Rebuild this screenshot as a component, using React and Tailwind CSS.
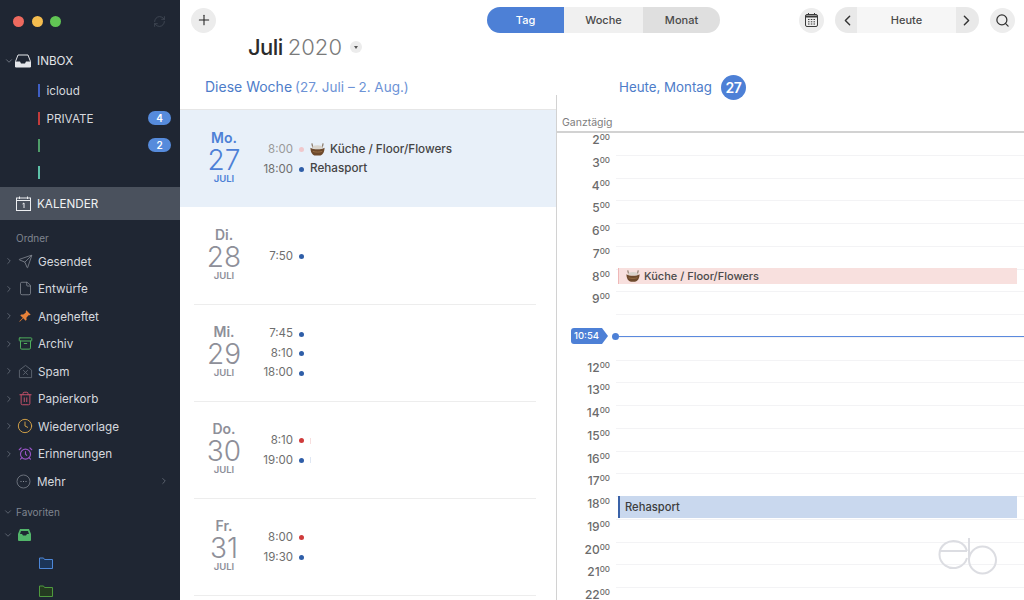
import {
  AlarmClock,
  Archive,
  ChevronDown,
  ChevronLeft,
  ChevronRight,
  Clock,
  File,
  Plus,
  RefreshCw,
  Search,
  Send,
  Trash2,
} from "lucide-react";

const accounts = [
  { name: "icloud", color: "bg-[#3f5fc4]" },
  { name: "PRIVATE", color: "bg-[#c23b3b]", badge: 4 },
  { name: "", color: "bg-[#4f9d69]", badge: 2 },
  { name: "", color: "bg-[#5cc0a8]" },
];

const SpamIcon = () => (
  <svg width="15" height="15" viewBox="0 0 16 16" fill="none" stroke="#5d6470" strokeWidth="1">
    <path d="M1.5 6.5 8 1.5l6.5 5v8h-13z" />
    <path d="m5.5 6.5 5 5m0-5-5 5" />
  </svg>
);

const PinIcon = () => (
  <svg width="14" height="14" viewBox="0 0 16 16" fill="#e8823a">
    <path d="M9.5 1.5 14.500 6.500 13 7.200 12 7 9.600 10l.2 2.400L8.700 13.500 6 10.500 2 14.500l-.5-.5L5.500 10 2.600 7.300 3.700 6.200l2.400.2L9 4l-.2-1z" />
  </svg>
);

const folders = [
  { name: "Gesendet", icon: <Send size={15} strokeWidth={1.2} color="#8b909a" /> },
  { name: "Entwürfe", icon: <File size={15} strokeWidth={1.2} color="#8b909a" /> },
  { name: "Angeheftet", icon: <PinIcon /> },
  { name: "Archiv", icon: <Archive size={15} strokeWidth={1.6} color="#4fae5c" /> },
  { name: "Spam", icon: <SpamIcon /> },
  { name: "Papierkorb", icon: <Trash2 size={15} strokeWidth={1.6} color="#c4506a" /> },
  { name: "Wiedervorlage", icon: <Clock size={16} strokeWidth={1.4} color="#d9a648" /> },
  { name: "Erinnerungen", icon: <AlarmClock size={15} strokeWidth={1.8} color="#9a55c8" /> },
];

const days = [
  {
    short: "Mo.",
    num: 27,
    today: true,
    events: [
      { time: "8:00", dot: "bg-[#f0c8cc]", faded: true, title: "Küche / Floor/Flowers", basket: true },
      { time: "18:00", dot: "bg-[#2f5ea8]", title: "Rehasport" },
    ],
  },
  { short: "Di.", num: 28, events: [{ time: "7:50", dot: "bg-[#2f5ea8]" }] },
  {
    short: "Mi.",
    num: 29,
    events: [
      { time: "7:45", dot: "bg-[#2f5ea8]" },
      { time: "8:10", dot: "bg-[#2f5ea8]" },
      { time: "18:00", dot: "bg-[#2f5ea8]" },
    ],
  },
  {
    short: "Do.",
    num: 30,
    events: [
      { time: "8:10", dot: "bg-[#cf3b3b]", tick: "bg-[#f7dede]" },
      { time: "19:00", dot: "bg-[#2f5ea8]", tick: "bg-[#dfe7f3]" },
    ],
  },
  {
    short: "Fr.",
    num: 31,
    events: [
      { time: "8:00", dot: "bg-[#cf3b3b]" },
      { time: "19:30", dot: "bg-[#2f5ea8]" },
    ],
  },
];

const hours = [2, 3, 4, 5, 6, 7, 8, 9, 10, 11, 12, 13, 14, 15, 16, 17, 18, 19, 20, 21, 22];

const Basket = ({ size = 15 }) => (
  <svg width={size} height={size} viewBox="0 0 16 16" className="shrink-0">
    <path d="M3 6 2 1.500M13 6l1-4.500" stroke="#8a7a6a" strokeWidth="1.300" fill="none" />
    <ellipse cx="8" cy="5.500" rx="5.500" ry="2" fill="#d9d4cc" />
    <path d="M.5 6c2 1.500 4.500 1.800 7.500 1.800S13.500 7.500 15.500 6c0 4.500-2 8.500-5.500 8.500H6C2.500 14.500.5 10.500.5 6z" fill="#6e4a2c" />
    <path d="M3 10c3 1 7 1 10 0" stroke="#9a7048" strokeWidth="1" fill="none" />
  </svg>
);

const Sidebar = () => (
  <aside className="flex h-full w-[180px] shrink-0 flex-col overflow-hidden bg-[#1f2633] text-[11.700px] text-[#d5d8de]">
    <div className="flex h-[42px] shrink-0 items-center pr-[14px] pl-[13px]">
      <span className="h-[11px] w-[11px] rounded-full bg-[#ee6a5f]" />
      <span className="ml-[7.500px] h-[11px] w-[11px] rounded-full bg-[#f5bd4f]" />
      <span className="ml-[7.500px] h-[11px] w-[11px] rounded-full bg-[#61c554]" />
      <RefreshCw size={13} strokeWidth={1.2} color="#4c5360" className="ml-auto" />
    </div>

    <div className="flex h-[35px] shrink-0 items-start pt-[11px] pl-[4px]">
      <span className="flex h-[16px] items-center">
        <ChevronDown size={10} color="#7c828d" />
      </span>
      <svg width="16" height="14" viewBox="0 0 16 14" className="mt-[1px] ml-[1px]" fill="none">
        <path d="M3 1h10l2.500 6.500V13H.5V7.500z" stroke="#e4e6ea" strokeWidth="1" />
        <path d="M.5 7.500h4.500l1 2h4l1-2h4.500V13H.5z" fill="#e4e6ea" />
      </svg>
      <span className="ml-[6px] leading-[16px] text-[#e2e4e8]">INBOX</span>
    </div>

    {accounts.map((a, i) => (
      <div key={i} className="flex h-[27.400px] shrink-0 items-center pr-[9px] pl-[37.500px]">
        <span className={`h-[13px] w-[2px] ${a.color}`} />
        <span className="ml-[7px] pt-[3px]">{a.name}</span>
        {a.badge && (
          <span className="ml-auto flex h-[14px] w-[23px] items-center justify-center rounded-full bg-[#568bdc] text-[10px] font-semibold text-white">
            {a.badge}
          </span>
        )}
      </div>
    ))}

    <div className="flex h-[33px] shrink-0 items-center bg-[#4a515d] pl-[16px] text-[#f0f1f3]">
      <svg width="15" height="15" viewBox="0 0 15 15" fill="none" stroke="#eceef1" strokeWidth="1">
        <rect x="0.500" y="2" width="14" height="12.500" />
        <path d="M0.500 4.500h14M3.500 0.500v2.500M11.500 0.500v2.500" />
        <path d="M6.500 8 8 7v5" strokeWidth="1" />
      </svg>
      <span className="ml-[6px] pt-[3px]">KALENDER</span>
    </div>

    <div className="flex h-[27.750px] shrink-0 items-end pb-[1px] pl-[16px] text-[10px] text-[#7f8590]">Ordner</div>

    {folders.map((f) => (
      <div key={f.name} className="flex h-[27.500px] shrink-0 items-center pl-[4px]">
        <ChevronRight size={10} color="#666d79" />
        <span className="ml-[3px] flex w-[16px] justify-center">{f.icon}</span>
        <span className="ml-[5px] pt-[3px]">{f.name}</span>
      </div>
    ))}

    <div className="flex h-[27.500px] shrink-0 items-center pr-[11px] pl-[16px]">
      <svg width="15" height="15" viewBox="0 0 15 15" fill="none">
        <circle cx="7.500" cy="7.500" r="6.500" stroke="#6a707b" />
        <path d="M4.500 7.500h1M7 7.500h1M9.500 7.500h1" stroke="#8b909a" strokeWidth="1.200" />
      </svg>
      <span className="ml-[6px] pt-[3px]">Mehr</span>
      <ChevronRight size={10} color="#666d79" className="ml-auto" />
    </div>

    <div className="flex h-[27px] shrink-0 items-end pb-[2px] pl-[3px] text-[10px] text-[#7f8590]">
      <span className="flex h-[15px] items-center">
        <ChevronDown size={10} color="#666d79" />
      </span>
      <span className="ml-[3px]">Favoriten</span>
    </div>

    <div className="flex h-[27px] shrink-0 items-center pl-[3px]">
      <ChevronDown size={10} color="#666d79" />
      <svg width="13" height="12" viewBox="0 0 13 12" className="ml-[5px]">
        <path d="M2 0h9l2 5v6a1 1 0 0 1-1 1H1a1 1 0 0 1-1-1V5z" fill="#52b56a" />
        <path d="M3 2h7l1 3H9L8 6.500H5L4 5H2z" fill="#1f2633" />
      </svg>
    </div>

    <div className="flex h-[28px] shrink-0 items-center pl-[39px]">
      <svg width="14" height="12" viewBox="0 0 14 12" fill="#1c3558" stroke="#4d87d8" strokeWidth="1">
        <path d="M.5 1h4l1 1.500h8v9H.5z" />
      </svg>
    </div>
    <div className="flex h-[28px] shrink-0 items-center pl-[39px]">
      <svg width="14" height="12" viewBox="0 0 14 12" fill="#243a20" stroke="#4f9a3e" strokeWidth="1">
        <path d="M.5 1h4l1 1.500h8v9H.5z" />
      </svg>
    </div>
  </aside>
);

const Toolbar = () => (
  <header className="flex h-[40px] shrink-0 items-center pl-[11px] text-[11px] font-medium text-[#4a4a4a]">
    <button className="flex h-[25px] w-[25px] items-center justify-center rounded-full bg-[#ececec]">
      <Plus size={16} strokeWidth={1.6} color="#222" />
    </button>

    <div className="ml-[271px] flex h-[26px] w-[233px] overflow-hidden rounded-full">
      <span className="flex w-[77px] items-center justify-center bg-[#4d80d6] text-white">Tag</span>
      <span className="flex w-[79px] items-center justify-center bg-[#f0f0f0]">Woche</span>
      <span className="flex w-[77px] items-center justify-center bg-[#dfdfdf]">Monat</span>
    </div>

    <button className="ml-[79px] flex h-[25px] w-[25px] items-center justify-center rounded-full bg-[#ededed]">
      <svg width="13" height="14" viewBox="0 0 13 14" fill="none" stroke="#3a3a3a">
        <rect x="0.500" y="1.500" width="12" height="12" rx="1.500" />
        <path d="M0.500 3.500h12" strokeWidth="2" />
        <path d="M3.500 0v2M9.500 0v2M3 6.500h1.500M5.800 6.500h1.500M8.500 6.500H10M3 8.800h1.500M5.800 8.800h1.500M8.500 8.800H10M3 11h1.500M5.800 11h1.500M8.500 11H10" />
      </svg>
    </button>

    <div className="ml-[11px] flex h-[26px] w-[144px] overflow-hidden rounded-full">
      <span className="flex w-[22px] items-center justify-center bg-[#e9e9e9] pl-[3px]">
        <ChevronLeft size={17} strokeWidth={2} color="#333" />
      </span>
      <span className="flex flex-1 items-center justify-center bg-[#f6f6f6]">Heute</span>
      <span className="flex w-[23px] items-center justify-center bg-[#e9e9e9] pr-[3px]">
        <ChevronRight size={17} strokeWidth={2} color="#333" />
      </span>
    </div>

    <button className="ml-[11px] flex h-[25px] w-[25px] items-center justify-center rounded-full bg-[#ededed]">
      <Search size={15} strokeWidth={2} color="#333" />
    </button>
  </header>
);

const EventRow = ({ ev }) => (
  <div className="flex h-[19.500px] items-center">
    <span className={`w-[39px] text-right text-[11.500px] ${ev.faded ? "text-[#9a9a9a]" : "text-[#6e6e6e]"}`}>
      {ev.time}
    </span>
    <span className={`ml-[6px] h-[5px] w-[5px] rounded-full ${ev.dot}`} />
    {ev.tick && <span className={`ml-[6px] h-[6px] w-px ${ev.tick}`} />}
    {ev.basket && (
      <span className="ml-[6px]">
        <Basket />
      </span>
    )}
    {ev.title && (
      <span className={`${ev.basket ? "ml-[5px]" : "ml-[6px]"} text-[11.700px] font-medium text-[#444]`}>
        {ev.title}
      </span>
    )}
  </div>
);

const DayRow = ({ day }) => (
  <div className={`flex h-[97px] ${day.today ? "mb-[1px] bg-[#e8f0f9] pl-[14px]" : "mr-[20px] ml-[14px] border-b border-[#ededed]"}`}>
    <div className="flex items-center">
      <div
        className={`flex w-[60px] flex-col items-center ${
          day.today ? "pb-[4px] text-[#4d80d6]" : "pb-[5px] text-[#8e8f99]"
        }`}
      >
        <span className="text-[14px] leading-[18px] font-semibold">{day.short}</span>
        <span className="text-[28px] leading-[26px] font-light">{day.num}</span>
        <span className="mt-[1px] text-[9.500px] leading-[10px] font-semibold">JULI</span>
      </div>
      <div className={`flex flex-col ${day.today ? "pt-[2px]" : "pt-[1px]"}`}>
        {day.events.map((ev) => (
          <EventRow key={ev.time} ev={ev} />
        ))}
      </div>
    </div>
  </div>
);

const Timeline = () => (
  <div className="relative flex-1">
    {hours.map((h) => (
      <div key={h} className="flex h-[22.750px]">
        <div className="w-[53px] shrink-0 text-right text-[12px] leading-[14px] font-medium text-[#6b6b6b]">
          {h !== 10 && h !== 11 && (
            <>
              {h}
              <sup className="top-[-4px] text-[8px]">00</sup>
            </>
          )}
        </div>
        <div className="ml-[6px] flex-1 border-b border-[#f3f3f5]" />
      </div>
    ))}

    <div className="absolute top-[135px] right-[7px] left-[61px] flex h-[16px] items-center border-l border-[#efb8b8] bg-[#f8e0de] pl-[7px] text-[11px] font-medium text-[#4a4a4a]">
      <Basket size={14} />
      <span className="ml-[4px]">Küche / Floor/Flowers</span>
    </div>

    <div className="absolute top-[363px] right-[7px] left-[61px] flex h-[22px] items-center border-l-2 border-[#3a62a8] bg-[#c9d8ee] pl-[5px] text-[11.200px] font-medium text-[#3d3d3d]">
      Rehasport
    </div>

    <div className="absolute top-[195px] right-0 left-[14px] flex h-[16px] items-center">
      <span className="flex h-[16px] w-[31px] items-center rounded-l-[3px] bg-[#4d80d6] pl-[3px] text-[9.500px] font-medium text-white">
        10:54
      </span>
      <span className="h-0 w-0 border-y-[8px] border-l-[6px] border-y-transparent border-l-[#4d80d6]" />
      <span className="ml-[4px] h-[7px] w-[7px] shrink-0 rounded-full bg-[#4d80d6]" />
      <span className="h-px flex-1 bg-[#5b8ade]" />
    </div>

    <svg width="62" height="40" viewBox="0 0 62 40" fill="none" stroke="#dcdde2" strokeWidth="2" className="absolute top-[404px] right-[24px]">
      <path d="M1 14h28M29 14A14 13.500 0 1 0 29 21" />
      <path d="M31 1v22A13.500 13.500 0 1 0 44.500 9.500 13.500 13.500 0 0 0 31 23" />
    </svg>
  </div>
);

export default function App() {
  return (
    <div className="flex h-[600px] w-[1024px] overflow-hidden bg-white font-['Inter',sans-serif]">
      <Sidebar />
      <main className="flex min-w-0 flex-1 flex-col">
        <Toolbar />

        <div className="flex h-[30px] shrink-0 items-start pl-[68px] text-[22px] leading-[14px] font-light">
          <span className="font-medium tracking-tight text-[#2b2b2b]">Juli</span>
          <span className="ml-[5px] text-[#7a7a7a]">2020</span>
          <span className="mt-[1px] ml-[8px] flex h-[12px] w-[12px] items-center justify-center rounded-full bg-[#ececec]">
            <span className="h-0 w-0 border-x-[2.500px] border-t-[3px] border-x-transparent border-t-[#555]" />
          </span>
        </div>

        <div className="flex min-h-0 flex-1">
          <section className="w-[376px] shrink-0">
            <div className="flex h-[40px] items-start border-b border-[#e6e6e6] pt-[8px] pl-[25px] text-[14px] leading-[18px] text-[#6d93d6]">
              <span className="text-[#4d7cc9]">Diese Woche</span>
              <span className="ml-[3px] text-[13.500px]">(27. Juli – 2. Aug.)</span>
            </div>
            {days.map((d) => (
              <DayRow key={d.num} day={d} />
            ))}
          </section>

          <section className="flex min-w-0 flex-1 flex-col">
            <div className="flex h-[25px] shrink-0 items-start pt-[5px] pl-[63px] text-[13.300px] text-[#4d7cc9]">
              <span className="leading-[24px]">Heute, Montag</span>
              <span className="ml-[9px] flex h-[25px] w-[25px] shrink-0 items-center justify-center rounded-full bg-[#4d80d6] text-[14px] font-semibold tracking-tight text-white">
                27
              </span>
            </div>
            <div className="flex min-h-0 flex-1 flex-col border-l-[1.500px] border-[#d2d2d2]">
              <div className="flex h-[38px] shrink-0 items-end border-b-2 border-[#d2d2d2] pl-[5px] text-[10.500px] text-[#7d7d7d]">
                Ganztägig
              </div>
              <Timeline />
            </div>
          </section>
        </div>
      </main>
    </div>
  );
}
